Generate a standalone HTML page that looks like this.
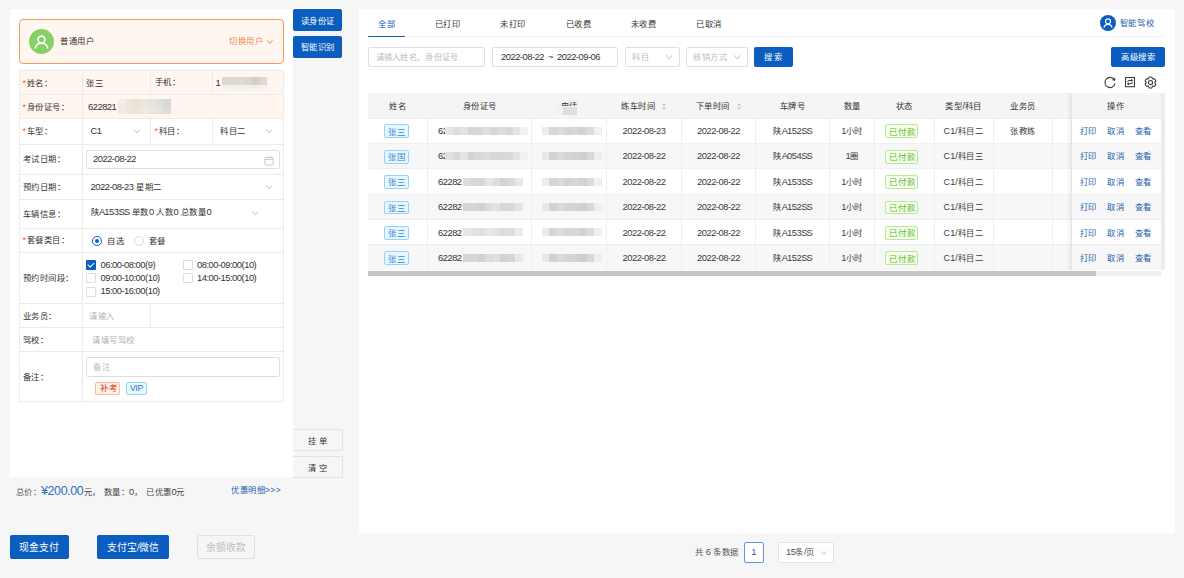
<!DOCTYPE html>
<html lang="zh-CN"><head><meta charset="utf-8">
<style>
*{box-sizing:border-box;margin:0;padding:0}
html,body{width:1184px;height:578px;overflow:hidden;background:#f6f6f6;font-family:"Liberation Sans",sans-serif;font-size:8.3px;color:#333}
.ab{position:absolute}
.t{position:absolute;white-space:nowrap;line-height:12px;height:12px;font-size:8.3px;letter-spacing:0.5px}
.n{font-size:9.4px;letter-spacing:-0.5px}
.u{letter-spacing:-0.95px}
</style></head><body>

<div class="ab" style="left:10px;top:9px;width:283px;height:468px;background:#fff"></div>
<div class="ab" style="left:19px;top:19px;width:264.5px;height:44.5px;border:1.5px solid #f99a60;border-radius:4px;background:#fff6ef"></div>
<div class="ab" style="left:29px;top:29px;width:25px;height:25px;border-radius:50%;background:#87d068"></div>
<svg class="ab" style="left:29px;top:29px" width="25" height="25" viewBox="0 0 25 25"><circle cx="12.5" cy="10.6" r="3.5" fill="none" stroke="#fff" stroke-width="1.6"/><path d="M6.2 19.6 C6.8 15.6 9.4 14.2 12.5 14.2 C15.6 14.2 18.2 15.6 18.8 19.6" fill="none" stroke="#fff" stroke-width="1.6"/></svg>
<div class="t" style="left:60px;top:35px;">普通用户</div>
<div class="t" style="left:229.2px;top:35px;color:#f2884b">切换用户</div>
<svg class="ab" style="left:265.8px;top:39px" width="7.7" height="5.8" viewBox="0 0 7.7 5.8"><polyline points="1.3,1.3 3.85,4.5 6.4,1.3" fill="none" stroke="#f2884b" stroke-width="1"/></svg>
<div class="ab" style="left:19px;top:70px;width:264px;height:48px;background:#fff6ef"></div>
<div class="ab" style="left:19px;top:70px;width:265px;height:1px;background:#ebebeb"></div>
<div class="ab" style="left:19px;top:94px;width:265px;height:1px;background:#ebebeb"></div>
<div class="ab" style="left:19px;top:118px;width:265px;height:1px;background:#ebebeb"></div>
<div class="ab" style="left:19px;top:144px;width:265px;height:1px;background:#ebebeb"></div>
<div class="ab" style="left:19px;top:174px;width:265px;height:1px;background:#ebebeb"></div>
<div class="ab" style="left:19px;top:199px;width:265px;height:1px;background:#ebebeb"></div>
<div class="ab" style="left:19px;top:228px;width:265px;height:1px;background:#ebebeb"></div>
<div class="ab" style="left:19px;top:252px;width:265px;height:1px;background:#ebebeb"></div>
<div class="ab" style="left:19px;top:303px;width:265px;height:1px;background:#ebebeb"></div>
<div class="ab" style="left:19px;top:327px;width:265px;height:1px;background:#ebebeb"></div>
<div class="ab" style="left:19px;top:351px;width:265px;height:1px;background:#ebebeb"></div>
<div class="ab" style="left:19px;top:401px;width:265px;height:1px;background:#ebebeb"></div>
<div class="ab" style="left:19px;top:70px;width:1px;height:332px;background:#ebebeb"></div>
<div class="ab" style="left:283px;top:70px;width:1px;height:332px;background:#ebebeb"></div>
<div class="ab" style="left:82px;top:70px;width:1px;height:332px;background:#ebebeb"></div>
<div class="ab" style="left:150px;top:70px;width:1px;height:24px;background:#ebebeb"></div>
<div class="ab" style="left:211.5px;top:70px;width:1px;height:24px;background:#ebebeb"></div>
<div class="ab" style="left:150px;top:118px;width:1px;height:26px;background:#ebebeb"></div>
<div class="ab" style="left:211.5px;top:118px;width:1px;height:26px;background:#ebebeb"></div>
<div class="ab" style="left:150px;top:303px;width:1px;height:24px;background:#ebebeb"></div>
<div class="t" style="left:22.5px;top:77px;"><span style="color:#f0553a;font-size:9px;margin-right:0.3px">*</span>姓名：</div>
<div class="t" style="left:86px;top:77px;">张三</div>
<div class="t" style="left:154.5px;top:76px;">手机：</div>
<div class="t" style="left:215.5px;top:77px;"><span class="n">1</span></div>
<div class="ab" style="left:221.5px;top:84.3px;width:45.0px;height:6px;filter:blur(0.8px)"><div class="ab" style="left:0.0px;top:0;width:7.8px;height:6px;background:#f7efe6"></div><div class="ab" style="left:7.5px;top:0;width:7.8px;height:6px;background:#f2efe4"></div><div class="ab" style="left:15.0px;top:0;width:7.8px;height:6px;background:#f1eee2"></div><div class="ab" style="left:22.5px;top:0;width:7.8px;height:6px;background:#f2efe4"></div><div class="ab" style="left:30.0px;top:0;width:7.8px;height:6px;background:#f4efe6"></div><div class="ab" style="left:37.5px;top:0;width:7.8px;height:6px;background:#f5f0e8"></div></div>
<div class="ab" style="left:221.5px;top:77px;width:45.599999999999994px;height:7.5px;filter:blur(0.6px)"><div class="ab" style="left:0.0px;top:0;width:7.8999999999999995px;height:7.5px;background:#dcd9d0"></div><div class="ab" style="left:7.6px;top:0;width:7.8999999999999995px;height:7.5px;background:#d8d8d8"></div><div class="ab" style="left:15.2px;top:0;width:7.8999999999999995px;height:7.5px;background:#dfdccd"></div><div class="ab" style="left:22.799999999999997px;top:0;width:7.8999999999999995px;height:7.5px;background:#d7d7d7"></div><div class="ab" style="left:30.4px;top:0;width:7.8999999999999995px;height:7.5px;background:#dccbc0"></div><div class="ab" style="left:38.0px;top:0;width:7.8999999999999995px;height:7.5px;background:#d9d9d9"></div></div>
<div class="t" style="left:22.5px;top:101px;"><span style="color:#f0553a;font-size:9px;margin-right:0.3px">*</span>身份证号：</div>
<div class="t" style="left:88px;top:101px;"><span class="n">622821</span></div>
<div class="ab" style="left:118px;top:99px;width:52.5px;height:7.5px;filter:blur(0.6px)"><div class="ab" style="left:0.0px;top:0;width:7.8px;height:7.5px;background:#f4ece4"></div><div class="ab" style="left:7.5px;top:0;width:7.8px;height:7.5px;background:#ede6dc"></div><div class="ab" style="left:15.0px;top:0;width:7.8px;height:7.5px;background:#e9e3da"></div><div class="ab" style="left:22.5px;top:0;width:7.8px;height:7.5px;background:#ece8dc"></div><div class="ab" style="left:30.0px;top:0;width:7.8px;height:7.5px;background:#e6e4dc"></div><div class="ab" style="left:37.5px;top:0;width:7.8px;height:7.5px;background:#e0dedb"></div><div class="ab" style="left:45.0px;top:0;width:7.8px;height:7.5px;background:#d8d8d8"></div></div>
<div class="ab" style="left:118px;top:106.5px;width:52.5px;height:7.5px;filter:blur(0.6px)"><div class="ab" style="left:0.0px;top:0;width:7.8px;height:7.5px;background:#f1ece2"></div><div class="ab" style="left:7.5px;top:0;width:7.8px;height:7.5px;background:#eee8dc"></div><div class="ab" style="left:15.0px;top:0;width:7.8px;height:7.5px;background:#ebe6dc"></div><div class="ab" style="left:22.5px;top:0;width:7.8px;height:7.5px;background:#efeadf"></div><div class="ab" style="left:30.0px;top:0;width:7.8px;height:7.5px;background:#e8e6de"></div><div class="ab" style="left:37.5px;top:0;width:7.8px;height:7.5px;background:#e4e2dd"></div><div class="ab" style="left:45.0px;top:0;width:7.8px;height:7.5px;background:#dddddd"></div></div>
<div class="t" style="left:22.5px;top:125px;"><span style="color:#f0553a;font-size:9px;margin-right:0.3px">*</span>车型：</div>
<div class="t" style="left:90.5px;top:125px;"><span class="n">C1</span></div>
<svg class="ab" style="left:132.8px;top:128.3px" width="8.4" height="6.3" viewBox="0 0 8.4 6.3"><polyline points="1.3,1.3 4.2,5.0 7.1000000000000005,1.3" fill="none" stroke="#bdbdbd" stroke-width="0.9"/></svg>
<div class="t" style="left:154.5px;top:125px;"><span style="color:#f0553a;font-size:9px;margin-right:0.3px">*</span>科目：</div>
<div class="t" style="left:220px;top:125px;">科目二</div>
<svg class="ab" style="left:265.3px;top:128.3px" width="8.4" height="6.3" viewBox="0 0 8.4 6.3"><polyline points="1.3,1.3 4.2,5.0 7.1000000000000005,1.3" fill="none" stroke="#bdbdbd" stroke-width="0.9"/></svg>
<div class="t" style="left:22.5px;top:153px;">考试日期：</div>
<div class="ab" style="left:86px;top:149.5px;width:194px;height:19.5px;border:1px solid #dedede;border-radius:2px"></div>
<div class="t" style="left:93px;top:153px;"><span class="n">2022-08-22</span></div>
<svg class="ab" style="left:263.5px;top:156px" width="10" height="10" viewBox="0 0 10 10"><rect x="1" y="1.5" width="8" height="7.5" rx="0.6" fill="none" stroke="#c4c4c4" stroke-width="0.9"/><line x1="1" y1="3.6" x2="9" y2="3.6" stroke="#c4c4c4" stroke-width="0.9"/><line x1="3.2" y1="0.6" x2="3.2" y2="2.2" stroke="#c4c4c4" stroke-width="0.9"/><line x1="6.8" y1="0.6" x2="6.8" y2="2.2" stroke="#c4c4c4" stroke-width="0.9"/></svg>
<div class="t" style="left:22.5px;top:181px;">预约日期：</div>
<div class="t" style="left:90.5px;top:181px;"><span class="n">2022-08-23</span> 星期二</div>
<svg class="ab" style="left:265.3px;top:184px" width="8.4" height="6.3" viewBox="0 0 8.4 6.3"><polyline points="1.3,1.3 4.2,5.0 7.1000000000000005,1.3" fill="none" stroke="#bdbdbd" stroke-width="0.9"/></svg>
<div class="t" style="left:22.5px;top:208px;">车辆信息：</div>
<div class="t" style="left:90.5px;top:206px;">陕<span class="n"><span class="u">A</span>153<span class="u">SS</span></span> 单数<span class="n">0</span> 人数<span class="n">0</span> 总数量<span class="n">0</span></div>
<svg class="ab" style="left:251.3px;top:209.5px" width="8.4" height="6.3" viewBox="0 0 8.4 6.3"><polyline points="1.3,1.3 4.2,5.0 7.1000000000000005,1.3" fill="none" stroke="#bdbdbd" stroke-width="0.9"/></svg>
<div class="t" style="left:22.5px;top:234px;"><span style="color:#f0553a;font-size:9px;margin-right:0.3px">*</span>套餐类目：</div>
<div class="ab" style="left:92px;top:236px;width:10px;height:10px;border:1px solid #0b5dbf;border-radius:50%"></div>
<div class="ab" style="left:95px;top:239px;width:4px;height:4px;background:#0b5dbf;border-radius:50%"></div>
<div class="t" style="left:107px;top:235px;">自选</div>
<div class="ab" style="left:134px;top:236px;width:10px;height:10px;border:1px solid #d9d9d9;border-radius:50%"></div>
<div class="t" style="left:148.5px;top:235px;">套餐</div>
<div class="t" style="left:22.5px;top:272px;">预约时间段：</div>
<div class="ab" style="left:86px;top:259.8px;width:10px;height:10px;background:#0b5dbf;border-radius:1px"></div>
<div class="ab" style="left:89.3px;top:261.0px;width:3.5px;height:6px;border-right:1.4px solid #fff;border-bottom:1.4px solid #fff;transform:rotate(45deg)"></div>
<div class="t" style="left:100.5px;top:259px;"><span class="n">06:00-08:00(9)</span></div>
<div class="ab" style="left:182.5px;top:259.8px;width:10px;height:10px;border:1px solid #dedede;border-radius:1px"></div>
<div class="t" style="left:197.0px;top:259px;"><span class="n">08:00-09:00(10)</span></div>
<div class="ab" style="left:86px;top:273.2px;width:10px;height:10px;border:1px solid #dedede;border-radius:1px"></div>
<div class="t" style="left:100.5px;top:272px;"><span class="n">09:00-10:00(10)</span></div>
<div class="ab" style="left:182.5px;top:273.2px;width:10px;height:10px;border:1px solid #dedede;border-radius:1px"></div>
<div class="t" style="left:197.0px;top:272px;"><span class="n">14:00-15:00(10)</span></div>
<div class="ab" style="left:86px;top:286.7px;width:10px;height:10px;border:1px solid #dedede;border-radius:1px"></div>
<div class="t" style="left:100.5px;top:285px;"><span class="n">15:00-16:00(10)</span></div>
<div class="t" style="left:22.5px;top:310px;">业务员：</div>
<div class="t" style="left:89px;top:310px;color:#b3b3b3">请输入</div>
<div class="t" style="left:22.5px;top:334px;">驾校：</div>
<div class="t" style="left:92px;top:334px;color:#b3b3b3">请填写驾校</div>
<div class="t" style="left:22.5px;top:371px;">备注：</div>
<div class="ab" style="left:86px;top:357px;width:194px;height:20px;border:1px solid #dedede;border-radius:2px"></div>
<div class="t" style="left:93px;top:361px;color:#bdbdbd">备注</div>
<div class="ab" style="left:95px;top:381.5px;width:25px;height:13.5px;border:1px solid #ffbb96;background:#fff2e8;border-radius:2px"></div>
<div class="t" style="left:99.5px;top:382px;font-size:8.5px;color:#d4380d;letter-spacing:0.3px">补考</div>
<div class="ab" style="left:126px;top:381.5px;width:20.5px;height:13.5px;border:1px solid #91d5ff;background:#e6f7ff;border-radius:2px"></div>
<div class="t" style="left:130px;top:382px;font-size:8.5px;color:#2a78c8;letter-spacing:-0.3px">VIP</div>
<div class="ab" style="left:293px;top:7.8px;width:49.5px;height:1.5px;background:#fff"></div>
<div class="ab" style="left:293px;top:9.2px;width:49px;height:21.8px;background:#0b5dbf;border-radius:2px"></div>
<div class="t" style="left:293px;top:15px;width:49px;color:#fff;text-align:center">读身份证</div>
<div class="ab" style="left:293px;top:36px;width:49px;height:21.5px;background:#0b5dbf;border-radius:2px"></div>
<div class="t" style="left:293px;top:41px;width:49px;color:#fff;text-align:center">智能识别</div>
<div class="ab" style="left:293px;top:429px;width:49.5px;height:21.5px;background:#f6f6f6;border:1px solid #e2e2e2;border-left:none"></div>
<div class="t" style="left:293px;top:435px;width:49.5px;color:#333;text-align:center;letter-spacing:3px;padding-left:3px">挂单</div>
<div class="ab" style="left:293px;top:456px;width:49.5px;height:21.5px;background:#f6f6f6;border:1px solid #e2e2e2;border-left:none"></div>
<div class="t" style="left:293px;top:462px;width:49.5px;color:#333;text-align:center;letter-spacing:3px;padding-left:3px">清空</div>
<div class="t" style="left:15.5px;top:486px;color:#555">总价：</div>
<div class="t" style="left:41px;top:484px;height:14px;line-height:14px;font-size:12.5px;letter-spacing:-0.4px;color:#2f6fbf">¥200.00</div>
<div class="t" style="left:83.5px;top:486px;color:#444">元，</div>
<div class="t" style="left:103.5px;top:486px;color:#444">数量：<span class="n">0</span>，</div>
<div class="t" style="left:146px;top:486px;color:#444">已优惠<span class="n">0</span>元</div>
<div class="t" style="left:231px;top:484px;color:#1f5fb0">优惠明细&gt;&gt;&gt;</div>
<div class="ab" style="left:9.5px;top:534.6px;width:59px;height:24.3px;background:#0b5dbf;border-radius:2px"></div>
<div class="t" style="left:9.5px;top:542px;font-size:9.8px;width:59px;color:#fff;text-align:center;letter-spacing:0">现金支付</div>
<div class="ab" style="left:96.6px;top:534.6px;width:72.4px;height:24.3px;background:#0b5dbf;border-radius:2px"></div>
<div class="t" style="left:96.6px;top:542px;font-size:9.8px;width:72.4px;color:#fff;text-align:center;letter-spacing:0">支付宝<span class="n">/</span>微信</div>
<div class="ab" style="left:197.4px;top:534.6px;width:58px;height:24.3px;border:1px solid #e0e0e0;background:#f5f5f5;border-radius:2px"></div>
<div class="t" style="left:197.4px;top:542px;font-size:9.8px;width:58px;color:#bfbfbf;text-align:center;letter-spacing:0">余额收款</div>
<div class="ab" style="left:359px;top:9.3px;width:816px;height:523.7px;background:#fff"></div>
<div class="ab" style="left:368px;top:36px;width:797px;height:1px;background:#eef1f5"></div>
<div class="ab" style="left:368px;top:35.6px;width:37px;height:1.7px;background:#0b5dbf;border-radius:1px"></div>
<div class="t" style="left:378.2px;top:18px;color:#0b5dbf">全部</div>
<div class="t" style="left:434.5px;top:18px;color:#333">已打印</div>
<div class="t" style="left:500px;top:18px;color:#333">未打印</div>
<div class="t" style="left:565.5px;top:18px;color:#333">已收费</div>
<div class="t" style="left:630.5px;top:18px;color:#333">未收费</div>
<div class="t" style="left:696.2px;top:18px;color:#333">已取消</div>
<div class="ab" style="left:1100px;top:14.8px;width:16px;height:16px;border-radius:50%;background:#0b5dbf"></div>
<svg class="ab" style="left:1100px;top:14.8px" width="16" height="16" viewBox="0 0 16 16"><circle cx="8" cy="6.3" r="2.5" fill="none" stroke="#fff" stroke-width="1.2"/><path d="M4 12.6 C4.4 10.2 6 9.3 8 9.3 C10 9.3 11.6 10.2 12 12.6" fill="none" stroke="#fff" stroke-width="1.2"/></svg>
<div class="t" style="left:1119.5px;top:17px;color:#1f5fb0;letter-spacing:0.8px">智能驾校</div>
<div class="ab" style="left:368px;top:47.3px;width:117.3px;height:19.3px;border:1px solid #dfdfdf;border-radius:2px"></div>
<div class="t" style="left:375.5px;top:51px;color:#bdbdbd;letter-spacing:0.3px">请输入姓名、身份证号</div>
<div class="ab" style="left:491.5px;top:47.3px;width:126px;height:19.3px;border:1px solid #dfdfdf;border-radius:2px"></div>
<div class="t" style="left:501px;top:51px;word-spacing:1.2px"><span class="n">2022-08-22</span> <span class="n">~</span> <span class="n">2022-09-06</span></div>
<div class="ab" style="left:624.5px;top:47.3px;width:55px;height:19.3px;border:1px solid #dfdfdf;border-radius:2px"></div>
<div class="t" style="left:632px;top:51px;color:#bdbdbd">科目</div>
<svg class="ab" style="left:665px;top:54.1px" width="8.4" height="6.3" viewBox="0 0 8.4 6.3"><polyline points="1.3,1.3 4.2,5.0 7.1000000000000005,1.3" fill="none" stroke="#bdbdbd" stroke-width="0.9"/></svg>
<div class="ab" style="left:686px;top:47.3px;width:61.5px;height:19.3px;border:1px solid #dfdfdf;border-radius:2px"></div>
<div class="t" style="left:693.2px;top:51px;color:#bdbdbd">核销方式</div>
<svg class="ab" style="left:732.5px;top:54.1px" width="8.4" height="6.3" viewBox="0 0 8.4 6.3"><polyline points="1.3,1.3 4.2,5.0 7.1000000000000005,1.3" fill="none" stroke="#bdbdbd" stroke-width="0.9"/></svg>
<div class="ab" style="left:753.6px;top:47.1px;width:39.2px;height:19.5px;background:#0b5dbf;border-radius:2px"></div>
<div class="t" style="left:753.6px;top:51px;width:39.2px;color:#fff;text-align:center;letter-spacing:2.5px;padding-left:2.5px">搜索</div>
<div class="ab" style="left:1111.1px;top:47.1px;width:54px;height:19.5px;background:#0b5dbf;border-radius:2px"></div>
<div class="t" style="left:1111.1px;top:51px;width:54px;color:#fff;text-align:center">高级搜索</div>
<svg class="ab" style="left:1103px;top:75px" width="14" height="14" viewBox="0 0 14 14"><path d="M11.3 4.6 A5.1 5.1 0 1 0 12.1 8.4" fill="none" stroke="#3a3a3a" stroke-width="1.05"/><path d="M12.3 2.6 L12.1 5.9 L9.0 5.0 Z" fill="#3a3a3a"/></svg>
<svg class="ab" style="left:1124px;top:76px" width="12" height="12" viewBox="0 0 12 12"><rect x="1.5" y="1.5" width="9" height="9.2" fill="none" stroke="#3a3a3a" stroke-width="1.05"/><path d="M3.7 5.9 C3.7 4.9 4.3 4.4 5.3 4.4 L8.4 4.4 M7.2 3.3 L8.4 4.4 L7.2 5.2 M8.3 6.3 C8.3 7.3 7.7 7.8 6.7 7.8 L3.6 7.8 M4.8 6.9 L3.6 7.8 L4.8 8.9" fill="none" stroke="#3a3a3a" stroke-width="1.05" stroke-linejoin="round"/></svg>
<svg class="ab" style="left:1144px;top:75.7px" width="13" height="13" viewBox="0 0 13 13"><polygon points="5.24,1.04 7.76,1.04 8.60,2.86 10.60,2.68 11.86,4.86 10.70,6.50 11.86,8.14 10.60,10.32 8.60,10.14 7.76,11.96 5.24,11.96 4.40,10.14 2.40,10.32 1.14,8.14 2.30,6.50 1.14,4.86 2.40,2.68 4.40,2.86" fill="none" stroke="#3a3a3a" stroke-width="1.05" stroke-linejoin="round"/><circle cx="6.5" cy="6.5" r="2.1" fill="none" stroke="#3a3a3a" stroke-width="1.05"/></svg>
<div class="ab" style="left:368px;top:93px;width:797px;height:25px;background:#f5f5f5"></div>
<div class="ab" style="left:368px;top:118.0px;width:793px;height:25.37px;background:#ffffff"></div>
<div class="ab" style="left:368px;top:117.5px;width:793px;height:1px;background:#edf0f3"></div>
<div class="ab" style="left:368px;top:143.37px;width:793px;height:25.37px;background:#f7f7f7"></div>
<div class="ab" style="left:368px;top:142.87px;width:793px;height:1px;background:#edf0f3"></div>
<div class="ab" style="left:368px;top:168.74px;width:793px;height:25.37px;background:#ffffff"></div>
<div class="ab" style="left:368px;top:168.24px;width:793px;height:1px;background:#edf0f3"></div>
<div class="ab" style="left:368px;top:194.11px;width:793px;height:25.37px;background:#f7f7f7"></div>
<div class="ab" style="left:368px;top:193.61px;width:793px;height:1px;background:#edf0f3"></div>
<div class="ab" style="left:368px;top:219.48000000000002px;width:793px;height:25.37px;background:#ffffff"></div>
<div class="ab" style="left:368px;top:218.98000000000002px;width:793px;height:1px;background:#edf0f3"></div>
<div class="ab" style="left:368px;top:244.85000000000002px;width:793px;height:25.37px;background:#f7f7f7"></div>
<div class="ab" style="left:368px;top:244.35000000000002px;width:793px;height:1px;background:#edf0f3"></div>
<div class="ab" style="left:427.0px;top:118px;width:1px;height:152px;background:#efefef"></div>
<div class="ab" style="left:531.0px;top:118px;width:1px;height:152px;background:#efefef"></div>
<div class="ab" style="left:606.0px;top:118px;width:1px;height:152px;background:#efefef"></div>
<div class="ab" style="left:681.0px;top:118px;width:1px;height:152px;background:#efefef"></div>
<div class="ab" style="left:755.0px;top:118px;width:1px;height:152px;background:#efefef"></div>
<div class="ab" style="left:829.0px;top:118px;width:1px;height:152px;background:#efefef"></div>
<div class="ab" style="left:874.0px;top:118px;width:1px;height:152px;background:#efefef"></div>
<div class="ab" style="left:933.5px;top:118px;width:1px;height:152px;background:#efefef"></div>
<div class="ab" style="left:992.5px;top:118px;width:1px;height:152px;background:#efefef"></div>
<div class="ab" style="left:1052.0px;top:118px;width:1px;height:152px;background:#efefef"></div>
<div class="ab" style="left:1066px;top:93px;width:5px;height:177px;background:linear-gradient(90deg,rgba(0,0,0,0),rgba(0,0,0,0.05))"></div>
<div class="ab" style="left:1070.5px;top:93px;width:1px;height:177px;background:#e4e4e4"></div>
<div class="ab" style="left:1161px;top:93px;width:4px;height:177px;background:#ececec"></div>
<div class="ab" style="left:368px;top:270.5px;width:793px;height:5.5px;background:#f0f0f0"></div>
<div class="ab" style="left:368px;top:270.5px;width:728px;height:5.5px;background:#c4c4c4"></div>
<div class="t" style="left:368px;top:100px;width:59.5px;text-align:center;">姓名</div>
<div class="t" style="left:427.5px;top:100px;width:104.0px;text-align:center;">身份证号</div>
<div class="t" style="left:531.5px;top:100px;width:75.0px;text-align:center;">电话</div>
<div class="ab" style="left:556px;top:105.8px;width:22px;height:9px;background:#f1f1f1"></div>
<div class="ab" style="left:563px;top:106.5px;width:14px;height:8px;background:#dedede;filter:blur(0.5px)"></div>
<div class="t" style="left:606.5px;top:100px;width:75.0px;text-align:center;padding-right:4px">练车时间<span style="display:inline-block;width:8px"></span></div>
<svg class="ab" style="left:661.0px;top:101.5px" width="6" height="9" viewBox="0 0 6 9"><path d="M1 3.5 L3 1.3 L5 3.5 Z M1 5.5 L3 7.7 L5 5.5 Z" fill="#bfbfbf"/></svg>
<div class="t" style="left:681.5px;top:100px;width:74.0px;text-align:center;padding-right:4px">下单时间<span style="display:inline-block;width:8px"></span></div>
<svg class="ab" style="left:735.5px;top:101.5px" width="6" height="9" viewBox="0 0 6 9"><path d="M1 3.5 L3 1.3 L5 3.5 Z M1 5.5 L3 7.7 L5 5.5 Z" fill="#bfbfbf"/></svg>
<div class="t" style="left:755.5px;top:100px;width:74.0px;text-align:center;">车牌号</div>
<div class="t" style="left:829.5px;top:100px;width:45.0px;text-align:center;">数量</div>
<div class="t" style="left:874.5px;top:100px;width:59.5px;text-align:center;">状态</div>
<div class="t" style="left:934px;top:100px;width:59px;text-align:center;">类型<span class="n">/</span>科目</div>
<div class="t" style="left:993px;top:100px;width:59.5px;text-align:center;">业务员</div>
<div class="t" style="left:1070.5px;top:100px;width:90.5px;text-align:center;">操作</div>
<div class="ab" style="left:383.5px;top:124.485px;width:25px;height:13.8px;border:1px solid #91d5ff;background:#e6f7ff;border-radius:2px"></div>
<div class="t" style="left:387.5px;top:126px;font-size:8.5px;color:#3a86d6;letter-spacing:0.3px">张三</div>
<div class="t" style="left:438px;top:125px;"><span class="n">622</span></div>
<div class="ab" style="left:445px;top:126.785px;width:82.5px;height:8px;filter:blur(0.5px)"><div class="ab" style="left:0.0px;top:0;width:7.8px;height:8px;background:#e6e6e6"></div><div class="ab" style="left:7.5px;top:0;width:7.8px;height:8px;background:#dcdcdc"></div><div class="ab" style="left:15.0px;top:0;width:7.8px;height:8px;background:#e2e2e2"></div><div class="ab" style="left:22.5px;top:0;width:7.8px;height:8px;background:#d2d8d8"></div><div class="ab" style="left:30.0px;top:0;width:7.8px;height:8px;background:#d8d8d8"></div><div class="ab" style="left:37.5px;top:0;width:7.8px;height:8px;background:#e0e0e0"></div><div class="ab" style="left:45.0px;top:0;width:7.8px;height:8px;background:#d6d6d6"></div><div class="ab" style="left:52.5px;top:0;width:7.8px;height:8px;background:#dadedf"></div><div class="ab" style="left:60.0px;top:0;width:7.8px;height:8px;background:#d8d8d8"></div><div class="ab" style="left:67.5px;top:0;width:7.8px;height:8px;background:#e4e4e4"></div><div class="ab" style="left:75.0px;top:0;width:7.8px;height:8px;background:#f2f2f2"></div></div>
<div class="ab" style="left:541.5px;top:126.785px;width:60.0px;height:8px;filter:blur(0.5px)"><div class="ab" style="left:0.0px;top:0;width:7.8px;height:8px;background:#ececec"></div><div class="ab" style="left:7.5px;top:0;width:7.8px;height:8px;background:#d2d8d8"></div><div class="ab" style="left:15.0px;top:0;width:7.8px;height:8px;background:#dcdcdc"></div><div class="ab" style="left:22.5px;top:0;width:7.8px;height:8px;background:#d2d6d6"></div><div class="ab" style="left:30.0px;top:0;width:7.8px;height:8px;background:#d8d8d8"></div><div class="ab" style="left:37.5px;top:0;width:7.8px;height:8px;background:#d2d2d2"></div><div class="ab" style="left:45.0px;top:0;width:7.8px;height:8px;background:#dcdcdc"></div><div class="ab" style="left:52.5px;top:0;width:7.8px;height:8px;background:#f0f0f0"></div></div>
<div class="t" style="left:606.5px;top:125px;width:75.0px;text-align:center;color:#3c3c3c"><span class="n">2022-08-23</span></div>
<div class="t" style="left:681.5px;top:125px;width:74.0px;text-align:center;color:#3c3c3c"><span class="n">2022-08-22</span></div>
<div class="t" style="left:755.5px;top:125px;width:74.0px;text-align:center;color:#3c3c3c">陕<span class="n"><span class="u">A</span>152<span class="u">SS</span></span></div>
<div class="t" style="left:829.5px;top:125px;width:45.0px;text-align:center;color:#3c3c3c"><span class="n">1</span>小时</div>
<div class="t" style="left:934px;top:125px;width:59px;text-align:center;color:#3c3c3c"><span class="n" style="letter-spacing:0.1px;font-size:9px">C1/</span>科目二</div>
<div class="t" style="left:993px;top:125px;width:59.5px;text-align:center;color:#3c3c3c">张教练</div>
<div class="ab" style="left:885px;top:124.485px;width:32.7px;height:13.8px;border:1px solid #b7eb8f;background:#f6ffed;border-radius:2px"></div>
<div class="t" style="left:888.8px;top:126px;font-size:8.5px;color:#5cb82e;letter-spacing:0.1px">已付款</div>
<div class="t" style="left:1079.5px;top:125px;color:#1f5fb0">打印</div>
<div class="t" style="left:1107px;top:125px;color:#1f5fb0">取消</div>
<div class="t" style="left:1134.5px;top:125px;color:#1f5fb0">查看</div>
<div class="ab" style="left:383.5px;top:149.855px;width:25px;height:13.8px;border:1px solid #91d5ff;background:#e6f7ff;border-radius:2px"></div>
<div class="t" style="left:387.5px;top:151px;font-size:8.5px;color:#3a86d6;letter-spacing:0.3px">张国</div>
<div class="t" style="left:438px;top:150px;"><span class="n">62</span></div>
<div class="ab" style="left:445px;top:152.155px;width:82.5px;height:8px;filter:blur(0.5px)"><div class="ab" style="left:0.0px;top:0;width:7.8px;height:8px;background:#e0e0e0"></div><div class="ab" style="left:7.5px;top:0;width:7.8px;height:8px;background:#d8d8d8"></div><div class="ab" style="left:15.0px;top:0;width:7.8px;height:8px;background:#e4e4e4"></div><div class="ab" style="left:22.5px;top:0;width:7.8px;height:8px;background:#d0d6d6"></div><div class="ab" style="left:30.0px;top:0;width:7.8px;height:8px;background:#d9d9d9"></div><div class="ab" style="left:37.5px;top:0;width:7.8px;height:8px;background:#dcdcdc"></div><div class="ab" style="left:45.0px;top:0;width:7.8px;height:8px;background:#d8d8d8"></div><div class="ab" style="left:52.5px;top:0;width:7.8px;height:8px;background:#d4d8d8"></div><div class="ab" style="left:60.0px;top:0;width:7.8px;height:8px;background:#d9d9d9"></div><div class="ab" style="left:67.5px;top:0;width:7.8px;height:8px;background:#e0e4e4"></div><div class="ab" style="left:75.0px;top:0;width:7.8px;height:8px;background:#eef2f2"></div></div>
<div class="ab" style="left:541.5px;top:152.155px;width:60.0px;height:8px;filter:blur(0.5px)"><div class="ab" style="left:0.0px;top:0;width:7.8px;height:8px;background:#e8e8e8"></div><div class="ab" style="left:7.5px;top:0;width:7.8px;height:8px;background:#ccd4d4"></div><div class="ab" style="left:15.0px;top:0;width:7.8px;height:8px;background:#dadada"></div><div class="ab" style="left:22.5px;top:0;width:7.8px;height:8px;background:#d4d4d4"></div><div class="ab" style="left:30.0px;top:0;width:7.8px;height:8px;background:#d2d2d2"></div><div class="ab" style="left:37.5px;top:0;width:7.8px;height:8px;background:#cfcfcf"></div><div class="ab" style="left:45.0px;top:0;width:7.8px;height:8px;background:#d8d8d8"></div><div class="ab" style="left:52.5px;top:0;width:7.8px;height:8px;background:#eeeeee"></div></div>
<div class="t" style="left:606.5px;top:150px;width:75.0px;text-align:center;color:#3c3c3c"><span class="n">2022-08-22</span></div>
<div class="t" style="left:681.5px;top:150px;width:74.0px;text-align:center;color:#3c3c3c"><span class="n">2022-08-22</span></div>
<div class="t" style="left:755.5px;top:150px;width:74.0px;text-align:center;color:#3c3c3c">陕<span class="n"><span class="u">A</span>054<span class="u">SS</span></span></div>
<div class="t" style="left:829.5px;top:150px;width:45.0px;text-align:center;color:#3c3c3c"><span class="n">1</span>圈</div>
<div class="t" style="left:934px;top:150px;width:59px;text-align:center;color:#3c3c3c"><span class="n" style="letter-spacing:0.1px;font-size:9px">C1/</span>科目三</div>
<div class="ab" style="left:885px;top:149.855px;width:32.7px;height:13.8px;border:1px solid #b7eb8f;background:#f6ffed;border-radius:2px"></div>
<div class="t" style="left:888.8px;top:151px;font-size:8.5px;color:#5cb82e;letter-spacing:0.1px">已付款</div>
<div class="t" style="left:1079.5px;top:150px;color:#1f5fb0">打印</div>
<div class="t" style="left:1107px;top:150px;color:#1f5fb0">取消</div>
<div class="t" style="left:1134.5px;top:150px;color:#1f5fb0">查看</div>
<div class="ab" style="left:383.5px;top:175.225px;width:25px;height:13.8px;border:1px solid #91d5ff;background:#e6f7ff;border-radius:2px"></div>
<div class="t" style="left:387.5px;top:176px;font-size:8.5px;color:#3a86d6;letter-spacing:0.3px">张三</div>
<div class="t" style="left:438px;top:176px;"><span class="n">62282</span></div>
<div class="ab" style="left:440px;top:177.525px;width:82.5px;height:8px;filter:blur(0.5px)"><div class="ab" style="left:22.5px;top:0;width:7.8px;height:8px;background:#dcdcdc"></div><div class="ab" style="left:30.0px;top:0;width:7.8px;height:8px;background:#d8d8d8"></div><div class="ab" style="left:37.5px;top:0;width:7.8px;height:8px;background:#d6d6d6"></div><div class="ab" style="left:45.0px;top:0;width:7.8px;height:8px;background:#e6e6e6"></div><div class="ab" style="left:52.5px;top:0;width:7.8px;height:8px;background:#dedede"></div><div class="ab" style="left:60.0px;top:0;width:7.8px;height:8px;background:#d4d4d4"></div><div class="ab" style="left:67.5px;top:0;width:7.8px;height:8px;background:#dadada"></div><div class="ab" style="left:75.0px;top:0;width:7.8px;height:8px;background:#e8e8e8"></div></div>
<div class="ab" style="left:541.5px;top:177.525px;width:60.0px;height:8px;filter:blur(0.5px)"><div class="ab" style="left:0.0px;top:0;width:7.8px;height:8px;background:#ececec"></div><div class="ab" style="left:7.5px;top:0;width:7.8px;height:8px;background:#d2d8d8"></div><div class="ab" style="left:15.0px;top:0;width:7.8px;height:8px;background:#dcdcdc"></div><div class="ab" style="left:22.5px;top:0;width:7.8px;height:8px;background:#d2d6d6"></div><div class="ab" style="left:30.0px;top:0;width:7.8px;height:8px;background:#d8d8d8"></div><div class="ab" style="left:37.5px;top:0;width:7.8px;height:8px;background:#d2d2d2"></div><div class="ab" style="left:45.0px;top:0;width:7.8px;height:8px;background:#dcdcdc"></div><div class="ab" style="left:52.5px;top:0;width:7.8px;height:8px;background:#f0f0f0"></div></div>
<div class="t" style="left:606.5px;top:176px;width:75.0px;text-align:center;color:#3c3c3c"><span class="n">2022-08-22</span></div>
<div class="t" style="left:681.5px;top:176px;width:74.0px;text-align:center;color:#3c3c3c"><span class="n">2022-08-22</span></div>
<div class="t" style="left:755.5px;top:176px;width:74.0px;text-align:center;color:#3c3c3c">陕<span class="n"><span class="u">A</span>153<span class="u">SS</span></span></div>
<div class="t" style="left:829.5px;top:176px;width:45.0px;text-align:center;color:#3c3c3c"><span class="n">1</span>小时</div>
<div class="t" style="left:934px;top:176px;width:59px;text-align:center;color:#3c3c3c"><span class="n" style="letter-spacing:0.1px;font-size:9px">C1/</span>科目二</div>
<div class="ab" style="left:885px;top:175.225px;width:32.7px;height:13.8px;border:1px solid #b7eb8f;background:#f6ffed;border-radius:2px"></div>
<div class="t" style="left:888.8px;top:176px;font-size:8.5px;color:#5cb82e;letter-spacing:0.1px">已付款</div>
<div class="t" style="left:1079.5px;top:176px;color:#1f5fb0">打印</div>
<div class="t" style="left:1107px;top:176px;color:#1f5fb0">取消</div>
<div class="t" style="left:1134.5px;top:176px;color:#1f5fb0">查看</div>
<div class="ab" style="left:383.5px;top:200.595px;width:25px;height:13.8px;border:1px solid #91d5ff;background:#e6f7ff;border-radius:2px"></div>
<div class="t" style="left:387.5px;top:202px;font-size:8.5px;color:#3a86d6;letter-spacing:0.3px">张三</div>
<div class="t" style="left:438px;top:201px;"><span class="n">62282</span></div>
<div class="ab" style="left:440px;top:202.895px;width:82.5px;height:8px;filter:blur(0.5px)"><div class="ab" style="left:22.5px;top:0;width:7.8px;height:8px;background:#d4d4d4"></div><div class="ab" style="left:30.0px;top:0;width:7.8px;height:8px;background:#d6d6d6"></div><div class="ab" style="left:37.5px;top:0;width:7.8px;height:8px;background:#d2d2d2"></div><div class="ab" style="left:45.0px;top:0;width:7.8px;height:8px;background:#dcdcdc"></div><div class="ab" style="left:52.5px;top:0;width:7.8px;height:8px;background:#e2e2e2"></div><div class="ab" style="left:60.0px;top:0;width:7.8px;height:8px;background:#d6d6d6"></div><div class="ab" style="left:67.5px;top:0;width:7.8px;height:8px;background:#d8d8d8"></div><div class="ab" style="left:75.0px;top:0;width:7.8px;height:8px;background:#e4e4e4"></div></div>
<div class="ab" style="left:541.5px;top:202.895px;width:60.0px;height:8px;filter:blur(0.5px)"><div class="ab" style="left:0.0px;top:0;width:7.8px;height:8px;background:#e8e8e8"></div><div class="ab" style="left:7.5px;top:0;width:7.8px;height:8px;background:#ccd4d4"></div><div class="ab" style="left:15.0px;top:0;width:7.8px;height:8px;background:#dadada"></div><div class="ab" style="left:22.5px;top:0;width:7.8px;height:8px;background:#d4d4d4"></div><div class="ab" style="left:30.0px;top:0;width:7.8px;height:8px;background:#d2d2d2"></div><div class="ab" style="left:37.5px;top:0;width:7.8px;height:8px;background:#cfcfcf"></div><div class="ab" style="left:45.0px;top:0;width:7.8px;height:8px;background:#d8d8d8"></div><div class="ab" style="left:52.5px;top:0;width:7.8px;height:8px;background:#eeeeee"></div></div>
<div class="t" style="left:606.5px;top:201px;width:75.0px;text-align:center;color:#3c3c3c"><span class="n">2022-08-22</span></div>
<div class="t" style="left:681.5px;top:201px;width:74.0px;text-align:center;color:#3c3c3c"><span class="n">2022-08-22</span></div>
<div class="t" style="left:755.5px;top:201px;width:74.0px;text-align:center;color:#3c3c3c">陕<span class="n"><span class="u">A</span>152<span class="u">SS</span></span></div>
<div class="t" style="left:829.5px;top:201px;width:45.0px;text-align:center;color:#3c3c3c"><span class="n">1</span>小时</div>
<div class="t" style="left:934px;top:201px;width:59px;text-align:center;color:#3c3c3c"><span class="n" style="letter-spacing:0.1px;font-size:9px">C1/</span>科目二</div>
<div class="ab" style="left:885px;top:200.595px;width:32.7px;height:13.8px;border:1px solid #b7eb8f;background:#f6ffed;border-radius:2px"></div>
<div class="t" style="left:888.8px;top:202px;font-size:8.5px;color:#5cb82e;letter-spacing:0.1px">已付款</div>
<div class="t" style="left:1079.5px;top:201px;color:#1f5fb0">打印</div>
<div class="t" style="left:1107px;top:201px;color:#1f5fb0">取消</div>
<div class="t" style="left:1134.5px;top:201px;color:#1f5fb0">查看</div>
<div class="ab" style="left:383.5px;top:225.965px;width:25px;height:13.8px;border:1px solid #91d5ff;background:#e6f7ff;border-radius:2px"></div>
<div class="t" style="left:387.5px;top:227px;font-size:8.5px;color:#3a86d6;letter-spacing:0.3px">张三</div>
<div class="t" style="left:438px;top:227px;"><span class="n">62282</span></div>
<div class="ab" style="left:440px;top:228.26500000000001px;width:82.5px;height:8px;filter:blur(0.5px)"><div class="ab" style="left:22.5px;top:0;width:7.8px;height:8px;background:#e6e6e6"></div><div class="ab" style="left:30.0px;top:0;width:7.8px;height:8px;background:#e2e2e2"></div><div class="ab" style="left:37.5px;top:0;width:7.8px;height:8px;background:#dedede"></div><div class="ab" style="left:45.0px;top:0;width:7.8px;height:8px;background:#e6e6e6"></div><div class="ab" style="left:52.5px;top:0;width:7.8px;height:8px;background:#e2e2e2"></div><div class="ab" style="left:60.0px;top:0;width:7.8px;height:8px;background:#dcdcdc"></div><div class="ab" style="left:67.5px;top:0;width:7.8px;height:8px;background:#dedede"></div><div class="ab" style="left:75.0px;top:0;width:7.8px;height:8px;background:#ececec"></div></div>
<div class="ab" style="left:541.5px;top:228.26500000000001px;width:60.0px;height:8px;filter:blur(0.5px)"><div class="ab" style="left:0.0px;top:0;width:7.8px;height:8px;background:#ececec"></div><div class="ab" style="left:7.5px;top:0;width:7.8px;height:8px;background:#d2d8d8"></div><div class="ab" style="left:15.0px;top:0;width:7.8px;height:8px;background:#dcdcdc"></div><div class="ab" style="left:22.5px;top:0;width:7.8px;height:8px;background:#d2d6d6"></div><div class="ab" style="left:30.0px;top:0;width:7.8px;height:8px;background:#d8d8d8"></div><div class="ab" style="left:37.5px;top:0;width:7.8px;height:8px;background:#d2d2d2"></div><div class="ab" style="left:45.0px;top:0;width:7.8px;height:8px;background:#dcdcdc"></div><div class="ab" style="left:52.5px;top:0;width:7.8px;height:8px;background:#f0f0f0"></div></div>
<div class="t" style="left:606.5px;top:227px;width:75.0px;text-align:center;color:#3c3c3c"><span class="n">2022-08-22</span></div>
<div class="t" style="left:681.5px;top:227px;width:74.0px;text-align:center;color:#3c3c3c"><span class="n">2022-08-22</span></div>
<div class="t" style="left:755.5px;top:227px;width:74.0px;text-align:center;color:#3c3c3c">陕<span class="n"><span class="u">A</span>153<span class="u">SS</span></span></div>
<div class="t" style="left:829.5px;top:227px;width:45.0px;text-align:center;color:#3c3c3c"><span class="n">1</span>小时</div>
<div class="t" style="left:934px;top:227px;width:59px;text-align:center;color:#3c3c3c"><span class="n" style="letter-spacing:0.1px;font-size:9px">C1/</span>科目二</div>
<div class="ab" style="left:885px;top:225.965px;width:32.7px;height:13.8px;border:1px solid #b7eb8f;background:#f6ffed;border-radius:2px"></div>
<div class="t" style="left:888.8px;top:227px;font-size:8.5px;color:#5cb82e;letter-spacing:0.1px">已付款</div>
<div class="t" style="left:1079.5px;top:227px;color:#1f5fb0">打印</div>
<div class="t" style="left:1107px;top:227px;color:#1f5fb0">取消</div>
<div class="t" style="left:1134.5px;top:227px;color:#1f5fb0">查看</div>
<div class="ab" style="left:383.5px;top:251.33500000000004px;width:25px;height:13.8px;border:1px solid #91d5ff;background:#e6f7ff;border-radius:2px"></div>
<div class="t" style="left:387.5px;top:253px;font-size:8.5px;color:#3a86d6;letter-spacing:0.3px">张三</div>
<div class="t" style="left:438px;top:252px;"><span class="n">62282</span></div>
<div class="ab" style="left:440px;top:253.63500000000005px;width:82.5px;height:8px;filter:blur(0.5px)"><div class="ab" style="left:22.5px;top:0;width:7.8px;height:8px;background:#d4d4d4"></div><div class="ab" style="left:30.0px;top:0;width:7.8px;height:8px;background:#d6d6d6"></div><div class="ab" style="left:37.5px;top:0;width:7.8px;height:8px;background:#d0d0d0"></div><div class="ab" style="left:45.0px;top:0;width:7.8px;height:8px;background:#dadada"></div><div class="ab" style="left:52.5px;top:0;width:7.8px;height:8px;background:#e0e0e0"></div><div class="ab" style="left:60.0px;top:0;width:7.8px;height:8px;background:#d2d2d2"></div><div class="ab" style="left:67.5px;top:0;width:7.8px;height:8px;background:#d6d6d6"></div><div class="ab" style="left:75.0px;top:0;width:7.8px;height:8px;background:#e8e8e8"></div></div>
<div class="ab" style="left:541.5px;top:253.63500000000005px;width:60.0px;height:8px;filter:blur(0.5px)"><div class="ab" style="left:0.0px;top:0;width:7.8px;height:8px;background:#e8e8e8"></div><div class="ab" style="left:7.5px;top:0;width:7.8px;height:8px;background:#ccd4d4"></div><div class="ab" style="left:15.0px;top:0;width:7.8px;height:8px;background:#dadada"></div><div class="ab" style="left:22.5px;top:0;width:7.8px;height:8px;background:#d4d4d4"></div><div class="ab" style="left:30.0px;top:0;width:7.8px;height:8px;background:#d2d2d2"></div><div class="ab" style="left:37.5px;top:0;width:7.8px;height:8px;background:#cfcfcf"></div><div class="ab" style="left:45.0px;top:0;width:7.8px;height:8px;background:#d8d8d8"></div><div class="ab" style="left:52.5px;top:0;width:7.8px;height:8px;background:#eeeeee"></div></div>
<div class="t" style="left:606.5px;top:252px;width:75.0px;text-align:center;color:#3c3c3c"><span class="n">2022-08-22</span></div>
<div class="t" style="left:681.5px;top:252px;width:74.0px;text-align:center;color:#3c3c3c"><span class="n">2022-08-22</span></div>
<div class="t" style="left:755.5px;top:252px;width:74.0px;text-align:center;color:#3c3c3c">陕<span class="n"><span class="u">A</span>152<span class="u">SS</span></span></div>
<div class="t" style="left:829.5px;top:252px;width:45.0px;text-align:center;color:#3c3c3c"><span class="n">1</span>小时</div>
<div class="t" style="left:934px;top:252px;width:59px;text-align:center;color:#3c3c3c"><span class="n" style="letter-spacing:0.1px;font-size:9px">C1/</span>科目二</div>
<div class="ab" style="left:885px;top:251.33500000000004px;width:32.7px;height:13.8px;border:1px solid #b7eb8f;background:#f6ffed;border-radius:2px"></div>
<div class="t" style="left:888.8px;top:253px;font-size:8.5px;color:#5cb82e;letter-spacing:0.1px">已付款</div>
<div class="t" style="left:1079.5px;top:252px;color:#1f5fb0">打印</div>
<div class="t" style="left:1107px;top:252px;color:#1f5fb0">取消</div>
<div class="t" style="left:1134.5px;top:252px;color:#1f5fb0">查看</div>
<div class="t" style="left:694.5px;top:546px;color:#555">共 <span class="n">6</span> 条数据</div>
<div class="ab" style="left:743.5px;top:542.3px;width:20.2px;height:20.3px;border:1px solid #6396d6;background:#fff;border-radius:2px"></div>
<div class="t" style="left:743.5px;top:546px;width:20.2px;color:#1f5fb0;text-align:center"><span class="n">1</span></div>
<div class="ab" style="left:778.3px;top:542.3px;width:55.3px;height:20.3px;border:1px solid #e3e3e3;background:#fff;border-radius:2px"></div>
<div class="t" style="left:786px;top:546px;color:#555"><span class="n">15</span>条<span class="n">/</span>页</div>
<svg class="ab" style="left:819.5px;top:549.5px" width="7.7" height="5.8" viewBox="0 0 7.7 5.8"><polyline points="1.3,1.3 3.85,4.5 6.4,1.3" fill="none" stroke="#bdbdbd" stroke-width="0.9"/></svg>
</body></html>
